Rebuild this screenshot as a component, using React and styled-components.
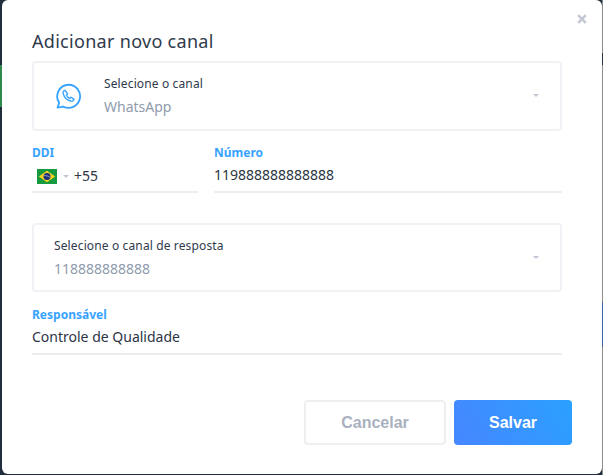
import React from 'react';
import styled, { createGlobalStyle } from 'styled-components';

const Global = createGlobalStyle`
  html, body { margin: 0; padding: 0; width: 603px; height: 475px; overflow: hidden; }
  * { box-sizing: border-box; }
`;

const Page = styled.div`
  width: 603px;
  height: 475px;
  display: flex;
  align-items: flex-start;
  padding-left: 2px;
  font-family: "Noto Sans", "Open Sans", sans-serif;
  background:
    linear-gradient(to bottom, #1f2d3d 0 65px, #2f8a4f 65px 107px, #1f2d3d 107px 475px) left / 2px 100% no-repeat,
    linear-gradient(to bottom, #8c8c8c 0 53px, #2a3648 53px 65px, #8c8c8c 65px 302px, #3f62a8 302px 347px, #8c8c8c 347px 475px) right / 1px 100% no-repeat,
    #1f2d3d;
`;

const Modal = styled.div`
  position: relative;
  width: 600px;
  height: 474px;
  background: #fff;
  border-radius: 6px;
  padding: 29px 40px 0 30px;
  display: flex;
  flex-direction: column;
`;

const Close = styled.button`
  position: absolute;
  top: 14px;
  right: 15px;
  width: 10px;
  height: 10px;
  padding: 0;
  border: 0;
  background: none;
  display: flex;
`;

const Title = styled.h2`
  margin: 0;
  font-size: 18px;
  line-height: 24px;
  font-weight: 400;
  letter-spacing: .3px;
  color: #2f3a4c;
`;

const SelectCard = styled.div`
  margin-top: ${p => p.$top}px;
  height: ${p => p.$height}px;
  border: 2px solid #f0f2f6;
  border-radius: 4px;
  display: flex;
  align-items: center;
  padding: 0 21px ${p => p.$lift || 0}px ${p => p.$inset}px;
`;

const ChannelIcon = styled.svg`
  width: 27px;
  height: 27px;
  margin: 2px 22px 0 1px;
  flex: none;
`;

const CardText = styled.div`
  flex: 1;
  display: flex;
  flex-direction: column;
  gap: 5px;
`;

const CardLabel = styled.div`
  font-size: 12px;
  line-height: 18px;
  letter-spacing: .13px;
  color: #2f3a4c;
`;

const CardValue = styled.div`
  font-size: 14px;
  line-height: 18px;
  color: #8f9bad;
`;

const Caret = styled.span`
  width: 0;
  height: 0;
  border-left: 3.5px solid transparent;
  border-right: 3.5px solid transparent;
  border-top: 3.5px solid #c2c8d3;
  flex: none;
`;

const Row = styled.div`
  margin-top: 14px;
  display: grid;
  grid-template-columns: 166px 348px;
  column-gap: 16px;
`;

const Field = styled.div`
  display: flex;
  flex-direction: column;
  border-bottom: 2px solid #ebedf0;
  height: 48px;
  margin-top: ${p => p.$top || 0}px;
`;

const FieldLabel = styled.label`
  font-size: 12px;
  line-height: 16px;
  font-weight: 700;
  color: #38a3ff;
`;

const FieldValue = styled.div`
  font-size: 14px;
  line-height: 20px;
  margin-top: 4px;
  color: #2b3545;
`;

const PhoneValue = styled(FieldValue)`
  display: flex;
  align-items: center;
  margin-top: 5px;
  padding-left: 5px;
`;

const Flag = styled.svg`
  width: 20px;
  height: 15px;
  flex: none;
`;

const FlagCaret = styled(Caret)`
  margin: 0 5px 0 6px;
`;

const Footer = styled.div`
  margin-top: 45px;
  margin-right: -10px;
  display: flex;
  justify-content: flex-end;
  gap: 8px;
`;

const Button = styled.button`
  height: 45px;
  width: ${p => p.$width}px;
  border-radius: 4px;
  font-family: "Liberation Sans", Arial, sans-serif;
  font-size: 16px;
  font-weight: 700;
  padding: 0;
  ${p => p.$primary
    ? 'border: 0; color: #fff; background: linear-gradient(60deg, #4786ff 0%, #2aa0ff 100%);'
    : 'border: 2px solid #eeeff1; color: #a9b1bf; background: #fff;'}
`;

const WhatsApp = () => (
  <ChannelIcon viewBox="0 0 28 28" fill="none" stroke="#38a3ff" strokeWidth="1.900" strokeLinejoin="round" strokeLinecap="round">
    <path d="M14 1.800a12 12 0 1 1-5.600 22.600L2.600 25.600l1.700-5.200A12 12 0 0 1 14 1.800Z" />
    <path strokeWidth="1.500" d="M10.400 7.600c-1.500.4-2.300 1.600-1.900 3.100.9 3.800 4.200 7.100 8 8 1.500.4 2.700-.4 3.100-1.900l-3-2-1.400 1.200c-1.400-.7-2.600-1.900-3.300-3.300l1.200-1.400-2.700-3.700Z" />
  </ChannelIcon>
);

const BrazilFlag = () => (
  <Flag viewBox="0 0 20 15">
    <rect width="20" height="15" fill="#159a3e" />
    <path d="M10 1.800 18.200 7.500 10 13.200 1.800 7.500Z" fill="#f5d21f" />
    <circle cx="10" cy="7.500" r="3.500" fill="#1c2f7a" />
    <path d="M6.800 6.700c2.300-.3 4.600.3 6.300 1.700" stroke="#e8edf2" strokeWidth=".6" fill="none" />
  </Flag>
);

export default function App() {
  return (
    <Page>
      <Global />
      <Modal>
        <Close aria-label="Fechar">
          <svg width="10" height="10" viewBox="0 0 10 10">
            <path d="M1.200 1.200 8.800 8.800M8.800 1.200 1.200 8.800" stroke="#c3c8d2" strokeWidth="2.600" />
          </svg>
        </Close>
        <Title>Adicionar novo canal</Title>
        <SelectCard $top={8} $height={70} $inset={20} $lift={2}>
          <WhatsApp />
          <CardText>
            <CardLabel>Selecione o canal</CardLabel>
            <CardValue>WhatsApp</CardValue>
          </CardText>
          <Caret />
        </SelectCard>
        <Row>
          <Field>
            <FieldLabel>DDI</FieldLabel>
            <PhoneValue>
              <BrazilFlag />
              <FlagCaret />
              +55
            </PhoneValue>
          </Field>
          <Field>
            <FieldLabel>Número</FieldLabel>
            <FieldValue>119888888888888</FieldValue>
          </Field>
        </Row>
        <SelectCard $top={30} $height={69} $inset={20}>
          <CardText>
            <CardLabel>Selecione o canal de resposta</CardLabel>
            <CardValue>118888888888</CardValue>
          </CardText>
          <Caret />
        </SelectCard>
        <Field $top={15}>
          <FieldLabel>Responsável</FieldLabel>
          <FieldValue>Controle de Qualidade</FieldValue>
        </Field>
        <Footer>
          <Button $width={142}>Cancelar</Button>
          <Button $width={118} $primary>Salvar</Button>
        </Footer>
      </Modal>
    </Page>
  );
}
